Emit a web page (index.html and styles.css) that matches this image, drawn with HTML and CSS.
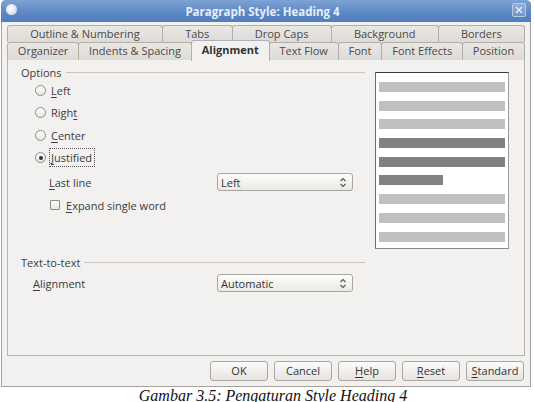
FILE: index.html
```html
<!DOCTYPE html>
<html>
<head>
<meta charset="utf-8">
<link rel="stylesheet" href="styles.css">
</head>
<body>
<div class="window">
  <div class="titlebar">
    <span class="app-icon"></span>
    <span class="title">Paragraph Style: Heading 4</span>
    <span class="close"><svg width="8" height="8" viewBox="0 0 8 8"><path d="M1 1L7 7M7 1L1 7" stroke="#eef3fa" stroke-width="1.4" fill="none"/></svg></span>
  </div>
  <div class="client">
    <div class="tabs">
      <div class="tabrow back">
        <div class="tab">Outline &amp; Numbering</div>
        <div class="tab">Tabs</div>
        <div class="tab">Drop Caps</div>
        <div class="tab">Background</div>
        <div class="tab">Borders</div>
      </div>
      <div class="tabrow front">
        <div class="tab">Organizer</div>
        <div class="tab">Indents &amp; Spacing</div>
        <div class="tab active">Alignment</div>
        <div class="tab">Text Flow</div>
        <div class="tab">Font</div>
        <div class="tab">Font Effects</div>
        <div class="tab">Position</div>
      </div>
    </div>
    <div class="panel">
      <div class="settings">
        <div class="group">
          <div class="legend"><span>Options</span><span class="rule"></span></div>
          <div class="radios">
            <div class="radio"><span class="dot"></span><span><u>L</u>eft</span></div>
            <div class="radio"><span class="dot"></span><span>Righ<u>t</u></span></div>
            <div class="radio"><span class="dot"></span><span><u>C</u>enter</span></div>
            <div class="radio"><span class="dot on"></span><span class="focus"><u>J</u>ustified</span></div>
          </div>
          <div class="field sub">
            <span class="label"><u>L</u>ast line</span>
            <div class="combo"><span>Left</span><svg class="arrows" width="8" height="11" viewBox="0 0 8 11"><path d="M1.5 4L4 1.5L6.5 4M1.5 7L4 9.5L6.5 7" stroke="#555" stroke-width="1.1" fill="none"/></svg></div>
          </div>
          <div class="check"><span class="box"></span><span><u>E</u>xpand single word</span></div>
        </div>
        <div class="group second">
          <div class="legend"><span>Text-to-text</span><span class="rule"></span></div>
          <div class="field">
            <span class="label"><u>A</u>lignment</span>
            <div class="combo"><span>Automatic</span><svg class="arrows" width="8" height="11" viewBox="0 0 8 11"><path d="M1.5 4L4 1.5L6.5 4M1.5 7L4 9.5L6.5 7" stroke="#555" stroke-width="1.1" fill="none"/></svg></div>
          </div>
        </div>
      </div>
      <div class="preview">
        <div class="bar"></div>
        <div class="bar"></div>
        <div class="bar"></div>
        <div class="bar dark"></div>
        <div class="bar dark"></div>
        <div class="bar dark short"></div>
        <div class="bar"></div>
        <div class="bar"></div>
        <div class="bar"></div>
      </div>
    </div>
    <div class="buttons">
      <div class="btn">OK</div>
      <div class="btn">Cancel</div>
      <div class="btn"><u>H</u>elp</div>
      <div class="btn"><u>R</u>eset</div>
      <div class="btn"><u>S</u>tandard</div>
    </div>
  </div>
</div>
<div class="caption">Gambar 3.5: Pengaturan Style Heading 4</div>
</body>
</html>
```
FILE: styles.css
```css
html, body {
  margin: 0;
  padding: 0;
}
body {
  width: 534px;
  height: 402px;
  overflow: hidden;
  background: #ffffff;
  font-family: "Open Sans", "DejaVu Sans", sans-serif;
  font-size: 11px;
  color: #3c3c3c;
}
u {
  text-decoration: underline;
  text-underline-offset: 2px;
}
.window {
  margin-left: 1px;
  width: 530px;
  height: 387px;
  box-sizing: border-box;
  border: 1px solid #a6a29b;
  border-top: none;
  border-radius: 5px 5px 0 0;
  background: #f2f1f0;
  display: flex;
  flex-direction: column;
}
.titlebar {
  height: 22px;
  flex: none;
  border-radius: 5px 5px 0 0;
  background: linear-gradient(#7ea3d4, #5a86c3 60%, #527fbd);
  display: flex;
  align-items: center;
  margin: 0 -1px;
}
.app-icon {
  width: 11px;
  height: 11px;
  border-radius: 50%;
  background: radial-gradient(circle at 40% 40%, #ffffff, #d8dde6 70%, #8e9cb2);
  margin-left: 5px;
  margin-top: -3px;
}
.title {
  flex: 1;
  text-align: center;
  color: #e6eef9;
  font-weight: bold;
  font-size: 11.5px;
  margin-left: -4px;
}
.close {
  width: 12px;
  height: 12px;
  border: 1px solid #b7cde9;
  border-radius: 2px;
  background: linear-gradient(#8fb0dc, #6e95cb);
  display: flex;
  align-items: center;
  justify-content: center;
  margin-right: 5px;
  margin-top: -2px;
}
.client {
  flex: 1;
  display: flex;
  flex-direction: column;
  padding: 3px 5px 0 5px;
}
.tabs {
  display: flex;
  flex-direction: column;
  padding: 0 1px 0 0;
}
.tabrow {
  display: flex;
  height: 17px;
}
.tabrow.front {
  height: 18px;
  position: relative;
  z-index: 1;
}
.tab {
  flex: 1 1 auto;
  text-align: center;
  line-height: 16px;
  border: 1px solid #b3aea6;
  border-bottom: none;
  border-radius: 3px 3px 0 0;
  background: linear-gradient(#e9e7e4, #dedbd7);
  color: #4a4a4a;
  margin-right: -1px;
  white-space: nowrap;
}
.tab.active {
  background: #f2f1f0;
  font-weight: bold;
  color: #333;
  margin-top: -2px;
  height: 20px;
  line-height: 18px;
  border-color: #a9b2be;
  position: relative;
  z-index: 2;
}
.panel {
  height: 297px;
  box-sizing: border-box;
  border: 1px solid #b9b4ac;
  margin-top: -1px;
  display: flex;
  padding: 5px 15px 0 13px;
}
.settings {
  flex: 1;
  display: flex;
  flex-direction: column;
}
.legend {
  display: flex;
  align-items: center;
  height: 14px;
  gap: 4px;
}
.rule {
  flex: 1;
  height: 1px;
  background: #c9c5bf;
  margin-top: 1px;
}
.radios {
  display: flex;
  flex-direction: column;
  padding-left: 14px;
}
.radio {
  display: flex;
  align-items: center;
  height: 22.5px;
  gap: 5px;
}
.dot {
  width: 9px;
  height: 9px;
  border: 1px solid #8d8a86;
  border-radius: 50%;
  background: linear-gradient(#ffffff, #e7e5e2);
  position: relative;
}
.dot.on::after {
  content: "";
  position: absolute;
  left: 2.5px;
  top: 2.5px;
  width: 4px;
  height: 4px;
  border-radius: 50%;
  background: #333;
}
.focus {
  outline: 1px dotted #555;
  outline-offset: 1px;
  padding: 0 1px 0 0;
}
.field {
  display: flex;
  align-items: center;
  height: 18px;
}
.field.sub {
  margin-top: 4px;
  padding-left: 28px;
}
.field .label {
  width: 168px;
  flex: none;
}
.combo {
  width: 136px;
  height: 18px;
  box-sizing: border-box;
  border: 1px solid #a9a59f;
  border-radius: 3px;
  background: linear-gradient(#fdfdfc, #ebe9e6);
  display: flex;
  align-items: center;
  justify-content: space-between;
  padding: 0 5px 0 3px;
  color: #333;
}
.check {
  display: flex;
  align-items: center;
  gap: 6px;
  padding-left: 29px;
  margin-top: 5px;
  height: 18px;
}
.box {
  width: 8px;
  height: 8px;
  border: 1px solid #8d8a86;
  border-radius: 1px;
  background: linear-gradient(#ffffff, #e7e5e2);
}
.group.second {
  margin-top: 41px;
}
.group.second .field {
  margin-top: 5px;
  padding-left: 12px;
}
.group.second .field .label {
  width: 184px;
}
.preview {
  width: 134px;
  height: 177px;
  box-sizing: border-box;
  margin-top: 7px;
  margin-left: 10px;
  background: #ffffff;
  border-top: 1px solid #3a3a3a;
  border-left: 1px solid #6e6e6e;
  border-right: 1px solid #9a9a9a;
  border-bottom: 1px solid #8a8a8a;
  padding: 9px 3px 0 3px;
  display: flex;
  flex-direction: column;
  gap: 8.7px;
}
.bar {
  height: 10px;
  background: #c0c0c0;
  flex: none;
}
.bar.dark {
  background: #818181;
}
.bar.short {
  width: 64px;
}
.buttons {
  display: flex;
  justify-content: flex-end;
  gap: 6px;
  padding: 5px 1px 0 0;
}
.btn {
  width: 58px;
  height: 20px;
  box-sizing: border-box;
  border: 1px solid #a9a59f;
  border-radius: 3px;
  background: linear-gradient(#fbfbfa, #e6e4e1);
  text-align: center;
  line-height: 18px;
  color: #333;
}
.caption {
  text-align: center;
  font-family: "Liberation Serif", "DejaVu Serif", serif;
  font-style: italic;
  font-size: 16px;
  line-height: 17px;
  margin-top: 0;
  padding-left: 12px;
  color: #111;
}
```
